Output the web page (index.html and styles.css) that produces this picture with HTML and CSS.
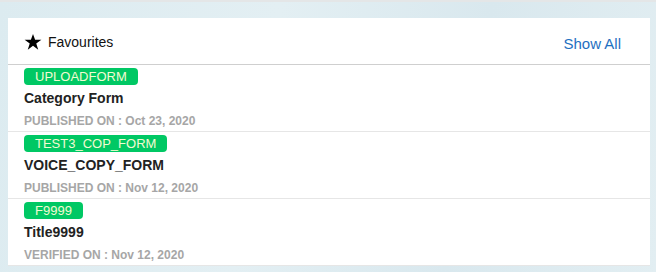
FILE: index.html
```html
<!DOCTYPE html>
<html>
<head>
<meta charset="utf-8">
<link rel="stylesheet" href="styles.css">
</head>
<body>
<div class="page">
  <div class="card">
    <div class="card-header">
      <div class="title">
        <svg class="star" width="18" height="16" viewBox="0 0 24 22"><path d="M12 0l2.9 7.9h8.6l-7 5.1 2.7 8.6L12 16.3l-7.2 5.3 2.7-8.6-7-5.1h8.6z" fill="#000"/></svg>
        <span>Favourites</span>
      </div>
      <a class="show-all">Show All</a>
    </div>
    <div class="item">
      <span class="badge">UPLOADFORM</span>
      <div class="item-title">Category Form</div>
      <div class="meta">PUBLISHED ON : Oct 23, 2020</div>
    </div>
    <div class="item">
      <span class="badge">TEST3_COP_FORM</span>
      <div class="item-title">VOICE_COPY_FORM</div>
      <div class="meta">PUBLISHED ON : Nov 12, 2020</div>
    </div>
    <div class="item">
      <span class="badge">F9999</span>
      <div class="item-title">Title9999</div>
      <div class="meta">VERIFIED ON : Nov 12, 2020</div>
    </div>
  </div>
</div>
</body>
</html>
```
FILE: styles.css
```css
html, body {
  margin: 0;
  padding: 0;
}
body {
  width: 656px;
  height: 272px;
  overflow: hidden;
  font-family: "Liberation Sans", Arial, sans-serif;
  background: linear-gradient(100deg, #dcebf0 0%, #e3eff3 40%, #d9e8ee 70%, #e2eef2 100%);
}
.page {
  border-top: 2px solid #e4e6e7;
  padding: 16px 6px 0 8px;
}
.card {
  background: #fff;
}
.card-header {
  height: 46px;
  border-bottom: 1px solid #cfcfcf;
  display: flex;
  align-items: center;
  justify-content: space-between;
  padding: 0 29px 0 16px;
}
.title {
  display: flex;
  align-items: center;
  gap: 6px;
  font-size: 14px;
  color: #111;
  padding-top: 2px;
}
.star {
  display: block;
  margin-top: -1px;
}
.show-all {
  font-size: 15px;
  color: #1f70c1;
  padding-top: 4px;
}
.item {
  border-bottom: 1px solid #e6e6e6;
  padding: 3px 16px 1px;
  height: 62px;
}
.badge {
  display: inline-block;
  background: #00c864;
  color: #f2fbd2;
  font-size: 13px;
  line-height: 17px;
  height: 17px;
  padding: 0 11px;
  border-radius: 4px;
  vertical-align: top;
}
.item-title {
  margin-top: 1px;
  font-size: 14px;
  font-weight: bold;
  color: #222;
  line-height: 22px;
}
.meta {
  margin-top: 2px;
  font-size: 12px;
  font-weight: bold;
  color: #a6a6a6;
  line-height: 20px;
}
```
